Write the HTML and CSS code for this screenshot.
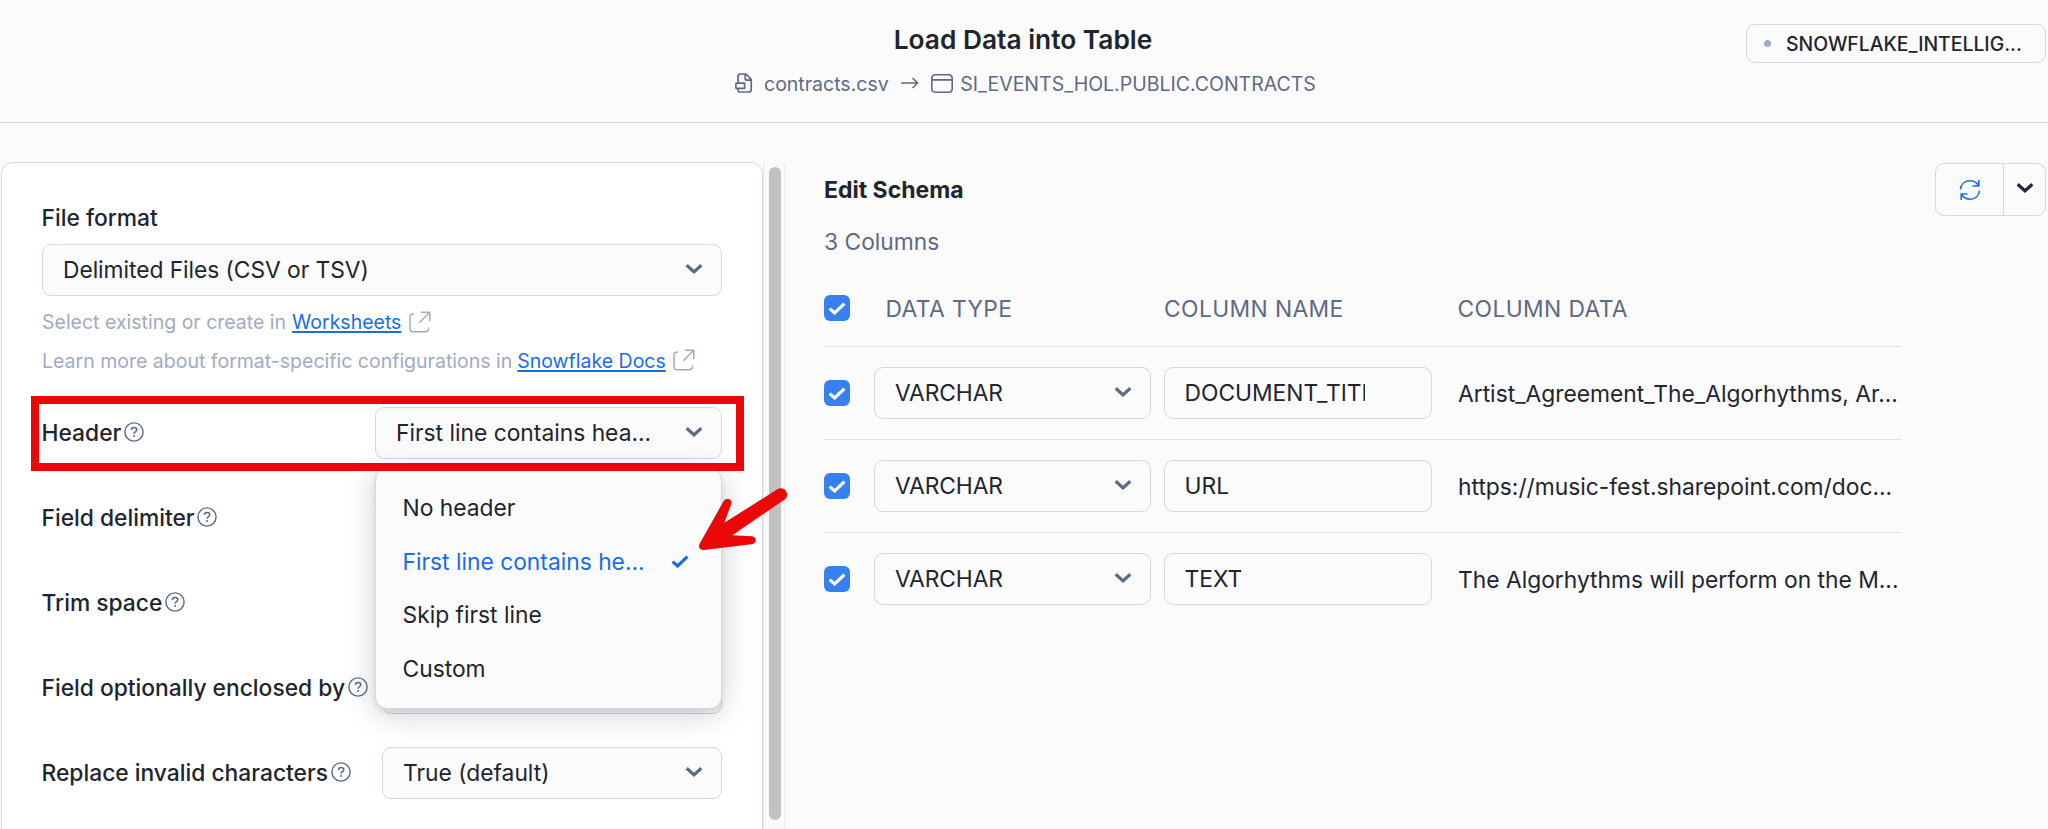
FILE: index.html
```html
<!DOCTYPE html>
<html lang="en">
<head>
<meta charset="utf-8">
<title>Load Data into Table</title>
<link rel="stylesheet" href="styles.css">
</head>
<body>
<svg class="sprite" width="0" height="0">
  <symbol id="chevron" viewBox="0 0 18 12"><path d="M1.7 2.2 9 8.900 16.300 2.200" fill="none" stroke="currentColor" stroke-width="3.2"/></symbol>
  <symbol id="check" viewBox="0 0 18 13"><path d="M1.6 6.6 6.6 11 16.4 1.6" fill="none" stroke="currentColor" stroke-width="3.2"/></symbol>
  <symbol id="help" viewBox="0 0 20 20"><circle cx="10" cy="10" r="9.1" fill="none" stroke="currentColor" stroke-width="1.4"/><path d="M7.3 7.9C7.4 6.300 8.500 5.400 10.100 5.400C11.700 5.400 12.800 6.400 12.800 7.700C12.800 9.600 10.100 9.500 10.100 11.700" fill="none" stroke="currentColor" stroke-width="1.5"/><circle cx="10.100" cy="13.900" r="1" fill="currentColor"/></symbol>
  <symbol id="external" viewBox="0 0 22 22"><path d="M5 3H4.500C2.500 3 1 4 1 6V17.500C1 19.500 2.300 20.800 4.300 20.800H16C18.300 20.800 19.600 19.500 19.600 17.300V16.500M12 1.200H20.800V10.200M20.500 1.500 10.300 11.800" fill="none" stroke="currentColor" stroke-width="1.500"/></symbol>
</svg>

<header class="topbar">
  <h1 class="title">Load Data into Table</h1>
  <div class="route">
    <svg class="icon-file" viewBox="0 0 18 20" width="18" height="20"><path d="M3 10V3.400C3 1.800 3.800 1 5.400 1H11L16.200 6.400V16.400C16.200 18.200 15.400 19 13.800 19H5C3.700 19 3 18.400 3 17V15.500M10.200 1V5.200C10.200 6.400 11 7.200 12.200 7.200H16M1.800 10.200H9.600V15.400H1.800C1.200 15.400.9 15 .9 14.500V11.100C.9 10.500 1.200 10.200 1.800 10.200Z" fill="none" stroke="currentColor" stroke-width="1.700"/></svg>
    <span class="route-file">contracts.csv</span>
    <svg class="icon-arrow" viewBox="0 0 18 12" width="18" height="12"><path d="M0 6H16.500M11.500 1 16.600 6 11.500 11" fill="none" stroke="currentColor" stroke-width="1.600"/></svg>
    <svg class="icon-table" viewBox="0 0 22 19" width="22" height="19"><path d="M.8 4.600C.8 2 2 .8 4.600.8H17.400C20 .8 21.200 2 21.200 4.600V14.400C21.200 17 20 18.200 17.400 18.200H4.600C2 18.200.8 17 .8 14.400ZM.8 5.900H21.200" fill="none" stroke="currentColor" stroke-width="1.600"/></svg>
    <span class="route-table">SI_EVENTS_HOL.PUBLIC.CONTRACTS</span>
  </div>
  <button class="warehouse"><i class="dot"></i><span>SNOWFLAKE_INTELLIG...</span></button>
</header>

<main class="content">
  <section class="panel">
    <h2 class="label">File format</h2>
    <div class="select select-wide"><span>Delimited Files (CSV or TSV)</span><svg class="chevron"><use href="#chevron"/></svg></div>
    <p class="hint hint-first"><span>Select existing or create in</span> <a>Worksheets</a><svg class="external"><use href="#external"/></svg></p>
    <p class="hint hint-second"><span>Learn more about format-specific configurations in</span> <a>Snowflake Docs</a><svg class="external"><use href="#external"/></svg></p>

    <div class="rows">
      <div class="row row-open">
        <span class="label">Header</span><svg class="help"><use href="#help"/></svg>
        <div class="select select-open"><span>First line contains hea...</span><svg class="chevron"><use href="#chevron"/></svg>
          <ul class="menu">
            <li>No header</li>
            <li class="selected"><span>First line contains he...</span><svg class="check"><use href="#check"/></svg></li>
            <li>Skip first line</li>
            <li>Custom</li>
          </ul>
        </div>
        <div class="highlight"></div>
        <svg class="pointer" viewBox="1011 315 276 198" width="92" height="66"><path d="M1018 490 1091 360Q1096 353 1104 353Q1116 356 1114 368L1093 425 1252 325Q1266 317 1277 328Q1286 344 1276 354L1117 463 1176 466Q1188 469 1187 479Q1184 489 1174 490L1031 507Q1014 507 1018 490Z" fill="#ea0707"/></svg>
      </div>
      <div class="row"><span class="label">Field delimiter</span><svg class="help"><use href="#help"/></svg><div class="select"></div></div>
      <div class="row"><span class="label">Trim space</span><svg class="help"><use href="#help"/></svg><div class="select"></div></div>
      <div class="row"><span class="label">Field optionally enclosed by</span><svg class="help"><use href="#help"/></svg><div class="select"></div></div>
      <div class="row"><span class="label">Replace invalid characters</span><svg class="help"><use href="#help"/></svg><div class="select"><span>True (default)</span><svg class="chevron"><use href="#chevron"/></svg></div></div>
    </div>
  </section>

  <div class="scrollbar"><div class="thumb"></div></div>

  <section class="schema">
    <div class="schema-head">
      <div>
        <h2 class="schema-title">Edit Schema</h2>
        <p class="count">3 Columns</p>
      </div>
      <div class="actions">
        <button class="refresh"><svg viewBox="0 0 22 22" width="22" height="22"><path d="M1.500 10.500C2 5 6 1.800 11 1.800C14.500 1.800 17.500 3.500 19.500 6.500M19.800 1V7H13.500M20.500 11.500C20 17 16 20.200 11 20.200C7.500 20.200 4.500 18.500 2.500 15.500M2.200 21V15H8.500" fill="none" stroke="currentColor" stroke-width="1.600"/></svg></button>
        <button class="more"><svg class="chevron"><use href="#chevron"/></svg></button>
      </div>
    </div>
    <div class="table">
      <div class="thead">
        <span class="box"><svg class="tick"><use href="#check"/></svg></span>
        <span class="th th-type">DATA TYPE</span><span class="th">COLUMN NAME</span><span class="th th-data">COLUMN DATA</span>
      </div>
      <div class="tr">
        <span class="box"><svg class="tick"><use href="#check"/></svg></span>
        <div class="select"><span>VARCHAR</span><svg class="chevron"><use href="#chevron"/></svg></div>
        <div class="input"><span>DOCUMENT_TITLE</span></div>
        <span class="data">Artist_Agreement_The_Algorhythms, Ar...</span>
      </div>
      <div class="tr">
        <span class="box"><svg class="tick"><use href="#check"/></svg></span>
        <div class="select"><span>VARCHAR</span><svg class="chevron"><use href="#chevron"/></svg></div>
        <div class="input"><span>URL</span></div>
        <span class="data">https://music-fest.sharepoint.com/doc...</span>
      </div>
      <div class="tr">
        <span class="box"><svg class="tick"><use href="#check"/></svg></span>
        <div class="select"><span>VARCHAR</span><svg class="chevron"><use href="#chevron"/></svg></div>
        <div class="input"><span>TEXT</span></div>
        <span class="data">The Algorhythms will perform on the M...</span>
      </div>
    </div>
  </section>
</main>
</body>
</html>
```
FILE: styles.css
```css
* { box-sizing: border-box; margin: 0; padding: 0; }

body {
  width: 2048px;
  height: 829px;
  overflow: hidden;
  background: #fbfbfb;
  color: #1e252f;
  font: 400 22.8px/28px Inter, "Liberation Sans", sans-serif;
}
.sprite { position: absolute; }
svg { flex: none; display: block; }
button { font: inherit; color: inherit; background: #fbfbfb; border: 1px solid #d2d8e6; }

.topbar { position: relative; height: 123px; border-bottom: 1px solid #d2d8e6; text-align: center; }
.title { padding-top: 24px; font-size: 26.300px; line-height: 32px; font-weight: 600; padding-right: 2px; }
.route { display: flex; align-items: center; height: 28px; margin-top: 13px; margin-left: 735px; color: #5d6a85; font-size: 19.500px; }
.route span { padding-top: 1px; }
.route-file { margin-left: 11px; }
.icon-arrow { margin-left: 12px; }
.icon-table { margin-left: 12px; }
.route-table { margin-left: 7.500px; }
.warehouse { position: absolute; top: 24px; right: 2px; width: 300px; height: 39px; display: flex; align-items: center; border-radius: 9px; font-size: 19.400px; font-weight: 500; padding-left: 17px; }
.dot { width: 7px; height: 7px; border-radius: 50%; background: #a0abc2; margin-right: 15px; }

.content { display: flex; padding: 39px 2px 0 1px; height: 706px; }
.panel { width: 762px; height: 680px; flex: none; padding: 41px 40px 0; background: #fff; border: 1px solid #d2d8e6; border-radius: 12px; }
.label { margin-left: -.500px; font-size: 22.800px; font-weight: 500; line-height: 28px; white-space: nowrap; }

.select { position: relative; display: flex; align-items: center; justify-content: space-between; height: 52px; padding: 0 18px 0 20px; background: #fbfbfb; border: 1px solid #d2d8e6; border-radius: 9px; }
.select > span { white-space: nowrap; }
.select-wide { margin-top: 12px; }
.select-wide > span { letter-spacing: -.050px; }
.chevron { width: 18px; height: 12px; margin-top: -2px; color: #5d6a85; }
.hint { display: flex; align-items: center; height: 38.500px; font-size: 19.500px; color: #a0abc2; white-space: nowrap; }
.hint-first { margin-top: 7px; }
.hint a { margin-left: 6px; color: #1a6ce7; text-decoration: underline; text-decoration-thickness: 1.500px; text-underline-offset: 2px; }
.hint-second a { margin-left: 5px; }
.external { width: 22px; height: 22px; margin: 0 0 1px 8px; }
.hint-second .external { margin-left: 7px; }

.rows { margin-top: 10.500px; }
.row { position: relative; display: flex; align-items: center; height: 85px; }
.row-open { z-index: 2; }
.help { width: 20px; height: 20px; margin-left: 2.500px; margin-top: -2px; color: #5d6a85; }
.row .select { width: 340px; margin-left: auto; flex: none; }
.row .select-open { width: 347px; }
.menu { position: absolute; left: -1px; top: 60px; width: 347px; height: 241px; padding: 12.500px 32px 0 26.500px; list-style: none; background: #fbfbfb; border: 1px solid #d2d8e6; border-radius: 12px; box-shadow: 0 5px 30px rgba(20, 25, 35, .2), 0 3px 6px rgba(20, 25, 35, .08); }
.menu li { display: flex; align-items: center; justify-content: space-between; height: 53.500px; }
.menu .selected { color: #1a6ce7; }
.check { width: 18px; height: 13px; }
.highlight { position: absolute; left: -11px; top: 5.500px; width: 713px; height: 75px; border: 8px solid #ea0707; }
.pointer { position: absolute; left: 655px; top: 95.500px; }

.scrollbar { width: 22px; flex: none; border-left: 1px solid #e8e8e8; border-right: 1px solid #ededed; background: #fafafa; padding: 5px 0 0 4.500px; }
.thumb { width: 12px; height: 653px; border-radius: 6px; background: #c1c1c1; }

.schema { flex: 1; padding-left: 39px; }
.schema-head { display: flex; justify-content: space-between; }
.schema-title { margin-top: 14px; font-size: 23px; line-height: 28px; font-weight: 700; }
.count { margin-top: 24px; color: #5d6a85; }
.actions { display: flex; height: 53px; margin-top: 1px; }
.actions button { display: flex; align-items: center; justify-content: center; }
.refresh { width: 69px; border-radius: 9px 0 0 9px; color: #1a6ce7; }
.refresh svg { margin-top: 1px; }
.more { width: 43px; margin-left: -1px; border-radius: 0 9px 9px 0; }
.more .chevron { color: #1e252f; margin-top: -3px; }

.table { width: 1078px; margin-top: 12px; }
.thead, .tr { display: grid; grid-template-columns: 37px 277px 268px 457px; column-gap: 13px; align-items: center; }
.thead { height: 78px; padding-top: 2px; color: #5d6a85; letter-spacing: .400px; }
.th { padding-top: 2px; }
.th-type { margin-left: 11.500px; }
.th-data { margin-left: 12.500px; }
.tr { height: 93px; border-top: 1px solid #dde1ea; }
.tr .select > span, .input span { margin-bottom: 1px; }
.tr .select > span { letter-spacing: -.100px; }
.box { width: 26px; height: 26px; border-radius: 6px; background: #3780f2; color: #fff; display: grid; place-items: center; }
.tick { width: 18px; height: 13px; }
.input { height: 52px; display: flex; align-items: center; padding: 0 19.500px; border: 1px solid #d2d8e6; border-radius: 9px; }
.input span { width: 180px; overflow: hidden; white-space: nowrap; }
.data { margin-left: 13px; padding-top: 2px; white-space: nowrap; }
```
